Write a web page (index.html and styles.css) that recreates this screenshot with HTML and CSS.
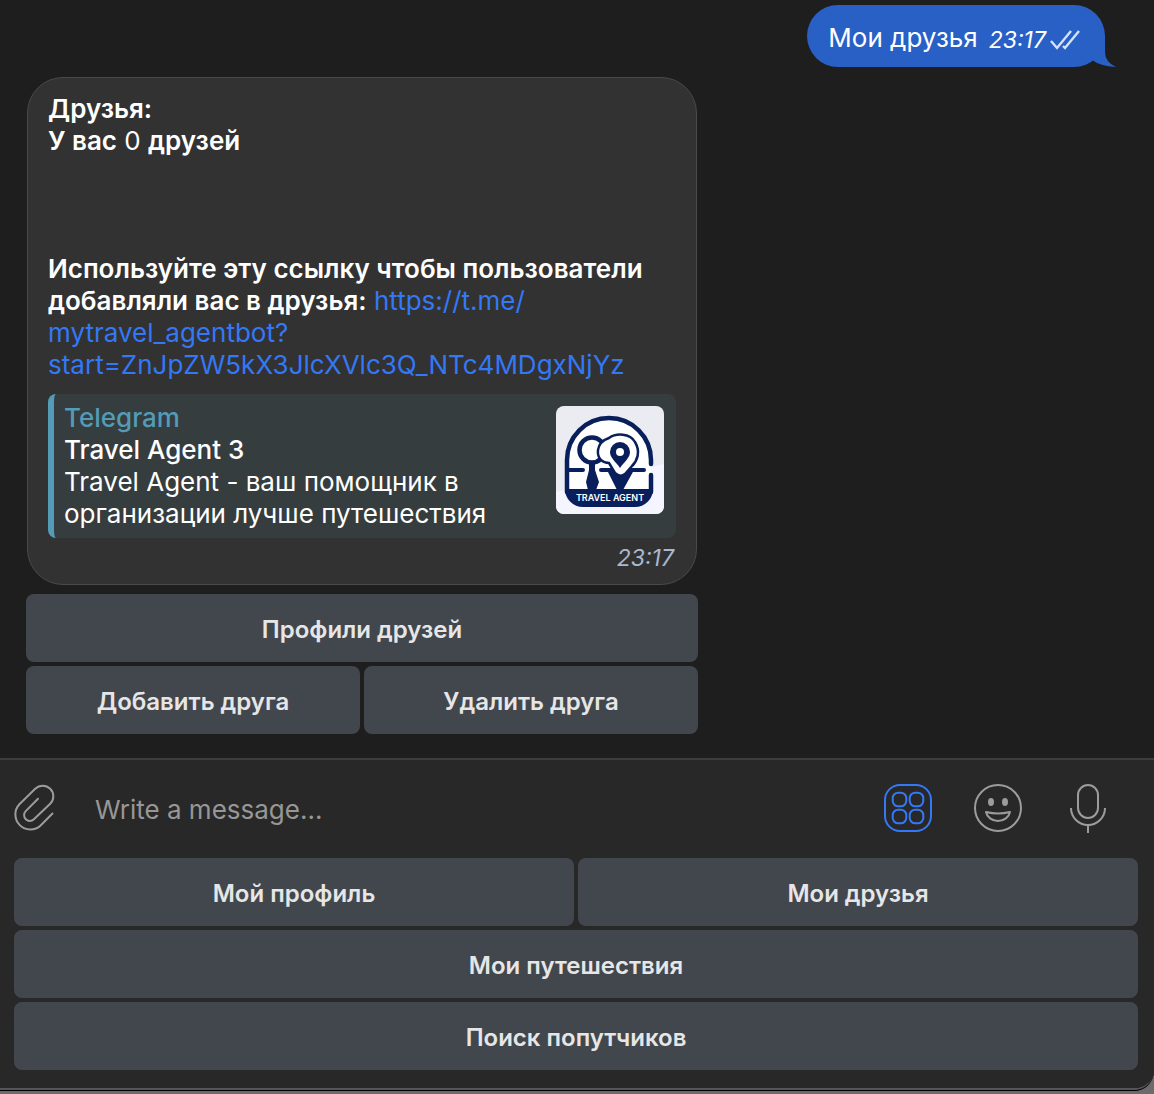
FILE: index.html
```html
<!DOCTYPE html>
<html lang="ru">
<head>
<meta charset="utf-8">
<meta name="viewport" content="width=device-width, initial-scale=1">
<title>Travel Agent</title>
<link rel="stylesheet" href="styles.css">
</head>
<body>
<div class="window">
  <main class="chat">
    <article class="outgoing">
      <p class="outgoing-text">Мои друзья</p>
      <time class="time">23:17</time>
      <svg class="checks" width="30" height="22" viewBox="0 0 30 22" fill="none" stroke="currentColor" stroke-width="2.4" aria-hidden="true"><path d="M1 12l6 7L21 2M13 17l2 2L29 2"/></svg>
      <svg class="tail" width="28" height="32" viewBox="0 0 28 32" fill="currentColor" aria-hidden="true"><path d="M0 0H17V17Q17 27 28 32Q12 31 4 25Z"/></svg>
    </article>

    <article class="incoming">
      <div class="bubble">
        <p><b>Друзья:</b><br><b>У вас</b> 0 <b>друзей</b></p>
        <p class="invite"><b>Используйте эту ссылку чтобы пользователи<br>добавляли вас в друзья:</b> <a href="#">https://t.me/<br>mytravel_agentbot?<br>start=ZnJpZW5kX3JlcXVlc3Q_NTc4MDgxNjYz</a></p>
        <section class="preview">
          <div class="preview-body">
            <p class="preview-site">Telegram</p>
            <p class="preview-title">Travel Agent 3</p>
            <p>Travel Agent - ваш помощник в<br>организации лучше путешествия</p>
          </div>
          <svg class="logo" width="108" height="108" viewBox="0 0 108 108" role="img" aria-label="Travel Agent">
            <rect width="108" height="108" fill="#ebecf2"/>
            <path d="M0 86L108 58V108H0Z" fill="#f4f5ff"/>
            <path d="M11 54A42 42 0 0 1 95 54V84A15 15 0 0 1 80 99H26A15 15 0 0 1 11 84Z" fill="#fff"/>
            <path d="M11 86V54A42 42 0 0 1 95 54V58M95 69V86" fill="none" stroke="#081f5c" stroke-width="4.500" stroke-linecap="round"/>
            <path d="M9 83H97A18 18 0 0 1 79 101H27A18 18 0 0 1 9 83Z" fill="#081f5c"/>
            <path d="M12 64H27M45 64H88" stroke="#081f5c" stroke-width="4" stroke-linecap="round"/>
            <path d="M33 58H39L39 64 43 76 40 84H32L30 76 33 64Z" fill="#081f5c"/>
            <circle cx="36" cy="44" r="12.500" fill="#fff" stroke="#081f5c" stroke-width="4.500"/>
            <path d="M51 64H78L67 84H61Z" fill="#081f5c"/>
            <path d="M53 32C60 27 74 27 79 36C85 46 81 55 76 60L69 68Q64 72 59 67L53 57C47 57 41 53 42 44C43 37 47 34 53 32Z" fill="#fff" stroke="#081f5c" stroke-width="2.500"/>
            <path d="M64 36A10 10 0 0 1 74 46C74 52 68 56 64 62C60 56 54 52 54 46A10 10 0 0 1 64 36Z" fill="#081f5c"/>
            <circle cx="64" cy="46" r="4" fill="#fff"/>
            <text x="54" y="95" text-anchor="middle" class="logo-text">TRAVEL AGENT</text>
          </svg>
        </section>
        <time class="time bubble-time">23:17</time>
      </div>
      <div class="keys">
        <button class="key wide" type="button">Профили друзей</button>
        <button class="key" type="button">Добавить друга</button>
        <button class="key" type="button">Удалить друга</button>
      </div>
    </article>
  </main>

  <footer class="composer">
    <form class="entry">
      <button class="icon-button" type="button" aria-label="Attach file">
        <svg width="44" height="50" viewBox="1 1 44 50" fill="none" stroke="currentColor" stroke-width="2" stroke-linecap="round"><path d="M25 16.800L12.700 29.100A5.800 5.800 0 0 0 20.900 37.300L37.200 21.800A10.600 10.600 0 0 0 22.200 6.800L6.400 22.300A15 15 0 0 0 27.600 43.500L39.500 31.500"/></svg>
      </button>
      <input class="field" type="text" placeholder="Write a message..." aria-label="Write a message">
      <button class="icon-button active" type="button" aria-label="Bot keyboard">
        <svg width="48" height="48" viewBox="0 0 48 48" fill="none" stroke="currentColor" stroke-width="2"><rect x="1" y="1" width="46" height="46" rx="15"/><rect x="8.700" y="8.700" width="13.600" height="13.600" rx="5.500"/><rect x="25.700" y="8.700" width="13.600" height="13.600" rx="5.500"/><rect x="8.700" y="25.700" width="13.600" height="13.600" rx="5.500"/><rect x="25.700" y="25.700" width="13.600" height="13.600" rx="5.500"/></svg>
      </button>
      <button class="icon-button" type="button" aria-label="Emoji">
        <svg width="48" height="48" viewBox="0 0 48 48" fill="none" stroke="currentColor" stroke-width="2"><circle cx="24" cy="24" r="23"/><path d="M12 28Q24 31 36 28C35 33 30 37 24 37S13 33 12 28Z" stroke-linejoin="round"/><ellipse cx="17" cy="18" rx="3" ry="4" fill="currentColor" stroke="none"/><ellipse cx="31" cy="18" rx="3" ry="4" fill="currentColor" stroke="none"/></svg>
      </button>
      <button class="icon-button" type="button" aria-label="Record voice message">
        <svg width="48" height="50" viewBox="0 0 48 50" fill="none" stroke="currentColor" stroke-width="2"><rect x="14" y="2" width="20" height="33" rx="10"/><path d="M7 25A17 17 0 0 0 41 25M24 42V50"/></svg>
      </button>
    </form>
    <div class="keys keyboard">
      <button class="key" type="button">Мой профиль</button>
      <button class="key" type="button">Мои друзья</button>
      <button class="key wide" type="button">Мои путешествия</button>
      <button class="key wide" type="button">Поиск попутчиков</button>
    </div>
  </footer>
</div>
</body>
</html>
```
FILE: styles.css
```css
* {
  box-sizing: border-box;
}

body {
  margin: 0;
  min-height: 100vh;
  display: flex;
  flex-direction: column;
  padding-bottom: 4px;
  background: #6c6a6a;
  color: #fff;
  font: 400 26px/32px Inter, "Liberation Sans", sans-serif;
}

p {
  margin: 0;
}

b {
  font-weight: 600;
}

a {
  color: #3478f6;
  text-decoration: none;
}

.window {
  flex: 1;
  display: flex;
  flex-direction: column;
  overflow: hidden;
  background: #1e1e1e;
  border-bottom: 2px solid #555;
  border-bottom-right-radius: 20px;
  box-shadow: 0 1px 0 #000;
}

.chat {
  flex: 1;
  display: flex;
  flex-direction: column;
  gap: 10px;
  padding: 5px 49px 24px 26px;
}

.outgoing {
  position: relative;
  align-self: flex-end;
  display: flex;
  align-items: center;
  height: 62px;
  padding: 3px 25px 0 21px;
  border-radius: 31px;
  background: #2860c5;
}

.outgoing-text {
  margin-right: 11px;
}

.time {
  font-size: 23px;
  font-style: italic;
}

.outgoing .time {
  padding-top: 5px;
}

.checks {
  margin: 5px 0 0 4px;
  color: #d3e2fb;
}

.tail {
  position: absolute;
  right: -11px;
  bottom: 0;
  color: #2860c5;
}

.incoming {
  width: 100%;
  max-width: 672px;
}

.bubble {
  display: flex;
  flex-direction: column;
  margin: 0 1px 9px;
  padding: 15px 20px 10px;
  border: 1px solid #4a4a4d;
  border-radius: 36px;
  background: #323232;
}

.invite {
  margin-top: 96px;
  overflow-wrap: anywhere;
}

.preview {
  display: flex;
  justify-content: space-between;
  align-items: flex-start;
  margin-top: 13px;
  padding: 8px 12px 8px 10px;
  border-left: 6px solid #539bb7;
  border-radius: 8px;
  background: #363d3e;
}

.preview-site {
  color: #539bb7;
  font-weight: 500;
}

.preview-title {
  font-weight: 500;
}

.logo {
  flex: none;
  margin-top: 4px;
  border-radius: 8px;
}

.logo-text {
  fill: #fff;
  font: 600 9px Inter, sans-serif;
}

.bubble-time {
  align-self: flex-end;
  margin: 4px 2px 0 0;
  color: #a9b8d1;
}

.keys {
  display: grid;
  grid-template-columns: 1fr 1fr;
  gap: 4px;
}

.key {
  height: 68px;
  padding: 4px 12px 0;
  border: 0;
  border-radius: 8px;
  background: #42464d;
  color: #e6e6e7;
  font: inherit;
  font-size: 24px;
  font-weight: 600;
}

.wide {
  grid-column: 1 / -1;
}

.composer {
  padding: 0 16px 18px 14px;
  border-top: 2px solid #3d3d3d;
  background: #282828;
}

.entry {
  display: flex;
  align-items: center;
  gap: 42px;
  height: 98px;
  padding: 0 26px 2px 0;
}

.icon-button {
  display: flex;
  padding: 0;
  border: 0;
  background: none;
  color: #9c9c9c;
}

.icon-button.active {
  color: #3478f6;
}

.field {
  flex: 1;
  min-width: 0;
  margin-left: -5px;
  padding: 3px 0 0;
  border: 0;
  outline: 0;
  background: none;
  color: #fff;
  font: inherit;
}

.field::placeholder {
  color: #979797;
  opacity: 1;
}
```
